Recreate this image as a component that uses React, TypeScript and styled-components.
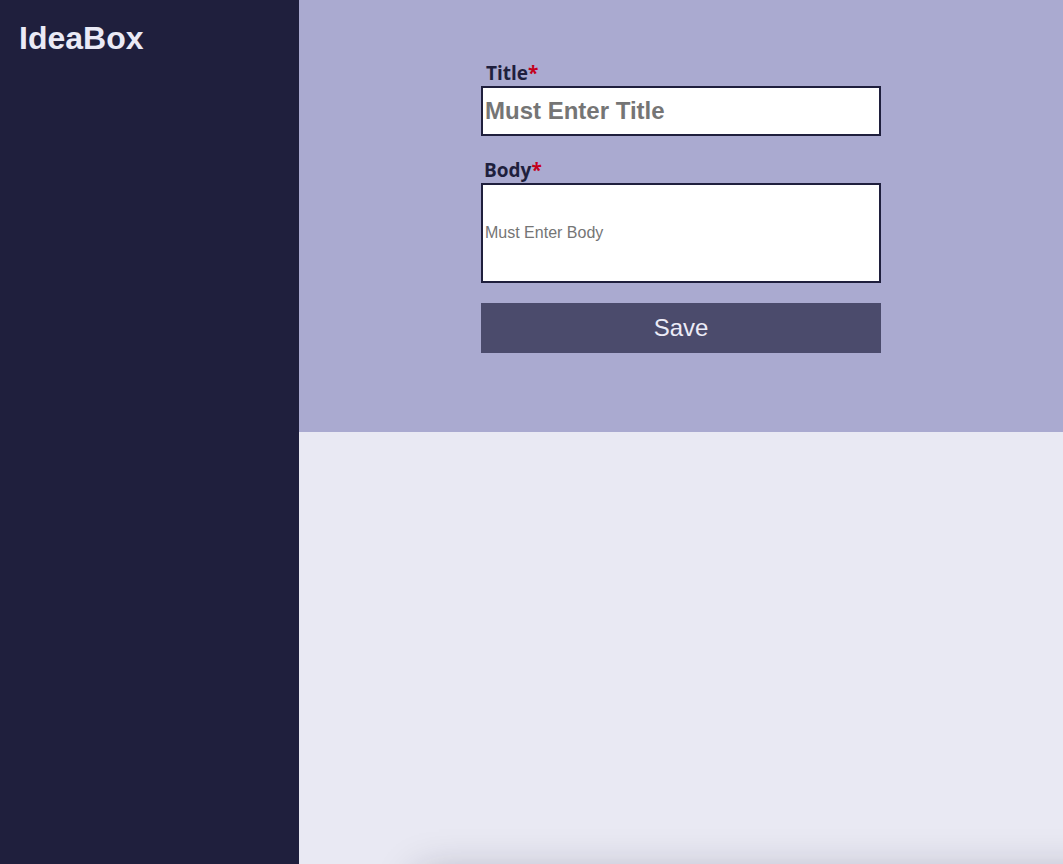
import React from "react";
import styled, { createGlobalStyle } from "styled-components";

const Global = createGlobalStyle`
  html, body { margin: 0; padding: 0; height: 100%; overflow: hidden; }
  body { font-family: "Liberation Sans", Arial, sans-serif; }
  #root { height: 100%; }
`;

const Page = styled.div`
  display: flex;
  height: 100vh;
  overflow: hidden;
`;

const Sidebar = styled.aside`
  width: 299px;
  flex: 0 0 299px;
  background: #1f1f3d;
  padding: 20px 19px;
  box-sizing: border-box;
`;

const Logo = styled.h1`
  margin: 0;
  font-family: "Liberation Sans", Arial, sans-serif;
  font-weight: 700;
  font-size: 32px;
  line-height: 36px;
  color: #eaeaf6;
`;

const Main = styled.main`
  flex: 1;
  display: flex;
  flex-direction: column;
  overflow: hidden;
`;

const FormSection = styled.section`
  height: 432px;
  flex: 0 0 432px;
  background: #aaaad0;
  display: flex;
  justify-content: center;
  padding-top: 60px;
  box-sizing: border-box;
`;

const Form = styled.form`
  width: 400px;
  display: flex;
  flex-direction: column;
`;

const Label = styled.label<{ $indent: number; $gap: number }>`
  font-family: "Open Sans", sans-serif;
  font-weight: 700;
  font-size: 19px;
  line-height: 26px;
  color: #1f1f3d;
  margin-left: ${(p) => p.$indent}px;
  margin-top: ${(p) => p.$gap}px;
`;

const Star = styled.span`
  color: #c4001c;
`;

const Field = styled.input<{ $h: number; $fs: number; $bold?: boolean }>`
  box-sizing: border-box;
  width: 400px;
  height: ${(p) => p.$h}px;
  border: 2px solid #1f1f3d;
  background: #fff;
  padding: 0 2px;
  margin: 0;
  font-family: "Liberation Sans", Arial, sans-serif;
  font-size: ${(p) => p.$fs}px;
  font-weight: ${(p) => (p.$bold ? 700 : 400)};
  color: #222;
  outline: none;
  &::placeholder {
    color: #757575;
    opacity: 1;
  }
`;

const SaveButton = styled.button`
  margin-top: 20px;
  height: 50px;
  width: 400px;
  border: none;
  background: #4b4b6c;
  color: #ecebf7;
  font-family: "Liberation Sans", Arial, sans-serif;
  font-size: 24px;
  cursor: pointer;
`;

const IdeasSection = styled.section`
  flex: 1;
  background: #e9e9f3;
  padding: 443px 0 0 120px;
  box-sizing: border-box;
`;

const IdeaCard = styled.div`
  width: 800px;
  height: 200px;
  background: #e9e9f3;
  box-shadow: 0 0 40px rgba(20, 20, 50, 0.3);
`;

export default function App() {
  return (
    <>
      <Global />
      <Page>
        <Sidebar>
          <Logo>IdeaBox</Logo>
        </Sidebar>
        <Main>
          <FormSection>
            <Form onSubmit={(e) => e.preventDefault()}>
              <Label $indent={5} $gap={0} htmlFor="title">
                Title<Star>*</Star>
              </Label>
              <Field id="title" $h={50} $fs={24} $bold placeholder="Must Enter Title" />
              <Label $indent={3} $gap={21} htmlFor="body">
                Body<Star>*</Star>
              </Label>
              <Field id="body" $h={100} $fs={16} placeholder="Must Enter Body" />
              <SaveButton type="submit">Save</SaveButton>
            </Form>
          </FormSection>
          <IdeasSection>
            <IdeaCard />
          </IdeasSection>
        </Main>
      </Page>
    </>
  );
}
